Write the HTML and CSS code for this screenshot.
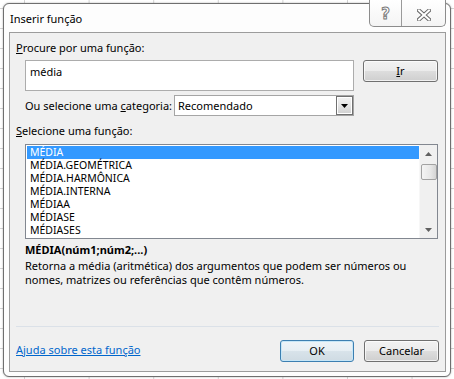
FILE: index.html
```html
<!DOCTYPE html>
<html lang="pt-BR">
<head>
<meta charset="utf-8">
<title>Inserir função</title>
<link rel="stylesheet" href="styles.css">
</head>
<body>
<div class="window">
  <div class="titlebar">
    <span class="title">Inserir função</span>
    <div class="caption">
      <span class="cap-btn help">?</span>
      <span class="cap-btn close">
        <svg width="14" height="12" viewBox="0 0 14 12">
          <path d="M2 1.5 L12 10.5 M12 1.5 L2 10.5" stroke="#6a6a6a" stroke-width="4" stroke-linecap="square" fill="none"/>
          <path d="M2 1.5 L12 10.5 M12 1.5 L2 10.5" stroke="#ffffff" stroke-width="2" stroke-linecap="square" fill="none"/>
        </svg>
      </span>
    </div>
  </div>
  <div class="client">
    <div class="label first"><u>P</u>rocure por uma função:</div>
    <div class="indent search-row">
      <div class="search-box">média</div>
      <button class="btn ir"><u>I</u>r</button>
    </div>
    <div class="indent cat-row">
      <span>Ou selecione uma <u>c</u>ategoria:</span>
      <div class="select">
        <span class="select-text">Recomendado</span>
        <span class="drop">
          <svg width="7" height="4" viewBox="0 0 7 4"><path d="M0 0 H7 L3.5 4 Z" fill="#000"/></svg>
        </span>
      </div>
    </div>
    <div class="label second"><u>S</u>elecione uma função:</div>
    <div class="indent list">
      <ul class="items">
        <li class="selected">MÉDIA</li>
        <li>MÉDIA.GEOMÉTRICA</li>
        <li>MÉDIA.HARMÔNICA</li>
        <li>MÉDIA.INTERNA</li>
        <li>MÉDIAA</li>
        <li>MÉDIASE</li>
        <li>MÉDIASES</li>
      </ul>
      <div class="scrollbar">
        <span class="sb-btn"><svg width="7" height="4" viewBox="0 0 7 4"><path d="M0 4 H7 L3.5 0 Z" fill="#606060"/></svg></span>
        <span class="thumb"></span>
        <span class="sb-fill"></span>
        <span class="sb-btn"><svg width="7" height="4" viewBox="0 0 7 4"><path d="M0 0 H7 L3.5 4 Z" fill="#606060"/></svg></span>
      </div>
    </div>
    <div class="indent signature">MÉDIA(núm1;núm2;...)</div>
    <p class="indent desc">Retorna a média (aritmética) dos argumentos que podem ser números ou<br>nomes, matrizes ou referências que contêm números.</p>
    <div class="separator"></div>
    <div class="footer">
      <a class="help-link" href="#">Ajuda sobre esta função</a>
      <div class="footer-btns">
        <button class="btn default">OK</button>
        <button class="btn">Cancelar</button>
      </div>
    </div>
  </div>
</div>
</body>
</html>
```
FILE: styles.css
```css
* { box-sizing: border-box; }
html, body { margin: 0; padding: 0; }
body {
  width: 454px;
  height: 379px;
  overflow: hidden;
  font-family: "Noto Sans", "Open Sans", sans-serif;
  font-size: 11px;
  color: #000;
  background-color: #fff;
  background-image:
    linear-gradient(to right, #d4d4d4 1px, transparent 1px),
    linear-gradient(to bottom, #d4d4d4 1px, transparent 1px);
  background-size: 64.6px 100%, 100% 20px;
  background-position: 24px 0, 0 8px;
  padding: 3px 0 0 3px;
}
.window {
  position: relative;
  width: 448px;
  height: 374px;
  border: 1px solid #6f6f6f;
  border-radius: 6px;
  background: #fdfdfd;
  box-shadow: 0 0 2px rgba(0,0,0,0.35);
}
.titlebar {
  height: 28px;
  padding-left: 6px;
  display: flex;
  align-items: center;
  line-height: 15px;
}
.title { color: #000; }
.caption {
  position: absolute;
  top: -4px;
  right: 4px;
  height: 27px;
  display: flex;
  border: 1px solid #8c8c8c;
  border-top: none;
  border-radius: 0 0 5px 5px;
  background: linear-gradient(#ffffff, #f4f4f4);
  overflow: hidden;
}
.cap-btn {
  display: flex;
  align-items: center;
  justify-content: center;
  padding-top: 3px;
}
.help {
  width: 31px;
  font-weight: bold;
  font-size: 15px;
  color: #fff;
  -webkit-text-stroke: 1px #7a7a7a;
  font-family: "DejaVu Sans", sans-serif;
}
.close {
  width: 44px;
  border-left: 1px solid #9a9a9a;
}
.client {
  margin: 0 4px 0 5px;
  height: 340px;
  border: 1px solid #9c9c9c;
  background: #f0f0f0;
  padding: 0 6px;
  line-height: 15px;
}
.label.first { margin-top: 7px; }
.label.second { margin-top: 7px; }
.indent { margin-left: 9px; }
.search-row {
  display: flex;
  align-items: flex-start;
  margin-top: 5px;
}
.search-box {
  width: 329px;
  height: 31px;
  border: 1px solid #acacac;
  background: #fff;
  padding: 3px 4px;
}
.btn {
  font-family: inherit;
  font-size: 11px;
  color: #000;
  height: 22px;
  padding: 0;
  border: 1px solid #707070;
  border-radius: 3px;
  background: linear-gradient(#f2f2f2 0%, #ebebeb 50%, #dddddd 51%, #cfcfcf 100%);
  box-shadow: inset 0 0 0 1px rgba(255,255,255,0.7);
  line-height: 18px;
}
.ir { width: 75px; margin-left: 9px; }
.cat-row {
  width: 329px;
  margin-top: 4px;
  display: flex;
  justify-content: space-between;
  align-items: center;
}
.select {
  width: 180px;
  height: 21px;
  border: 1px solid #a5a5a5;
  background: #fff;
  display: flex;
  align-items: center;
  padding: 0 0 0 3px;
}
.select-text { flex: 1; }
.drop {
  width: 17px;
  height: 19px;
  border: 1px solid #707070;
  background: linear-gradient(#f2f2f2, #e4e4e4 50%, #d0d0d0);
  display: flex;
  align-items: center;
  justify-content: center;
  box-shadow: inset 0 0 0 1px #fff;
}
.list {
  margin-top: 6px;
  width: 413px;
  height: 95px;
  border: 1px solid #828790;
  background: #fff;
  display: flex;
}
.items {
  list-style: none;
  margin: 0;
  padding: 1px 0 1px 1px;
  flex: 1;
  font-size: 10.5px;
}
.items li {
  height: 13px;
  line-height: 13px;
  padding-left: 3px;
  white-space: nowrap;
}
.items li.selected {
  background: #3399ff;
  color: #fff;
}
.scrollbar {
  width: 18px;
  display: flex;
  flex-direction: column;
  align-items: center;
  background: #f0f0f0;
  border-left: 1px solid #f7f7f7;
}
.sb-btn {
  height: 17px;
  width: 100%;
  display: flex;
  align-items: center;
  justify-content: center;
}
.thumb {
  margin-top: 2px;
  width: 16px;
  height: 16px;
  border: 1px solid #a2a2a2;
  border-radius: 2px;
  background: linear-gradient(to right, #f4f4f4, #e7e7e7 60%, #d4d4d4);
}
.sb-fill { flex: 1; }
.signature {
  margin-top: 3px;
  font-weight: bold;
}
.desc {
  margin-top: 2px;
  margin-bottom: 0;
  line-height: 14px;
}
.separator {
  margin-top: 39px;
  height: 1px;
  background: #dbe1e8;
}
.footer {
  margin-top: 13px;
  display: flex;
  justify-content: space-between;
  align-items: center;
}
.help-link {
  color: #0066cc;
  text-decoration: underline;
  margin-top: -3px;
}
.footer-btns { display: flex; gap: 10px; }
.footer-btns .btn { width: 74px; }
.footer-btns .btn + .btn { width: 75px; }
.btn.default {
  border-color: #3c7fb1;
  box-shadow: inset 0 0 0 1px #c6e6f7;
  background: linear-gradient(#eef4f8 0%, #e6eef3 50%, #d8e3ea 51%, #cfdbe3 100%);
}
```
